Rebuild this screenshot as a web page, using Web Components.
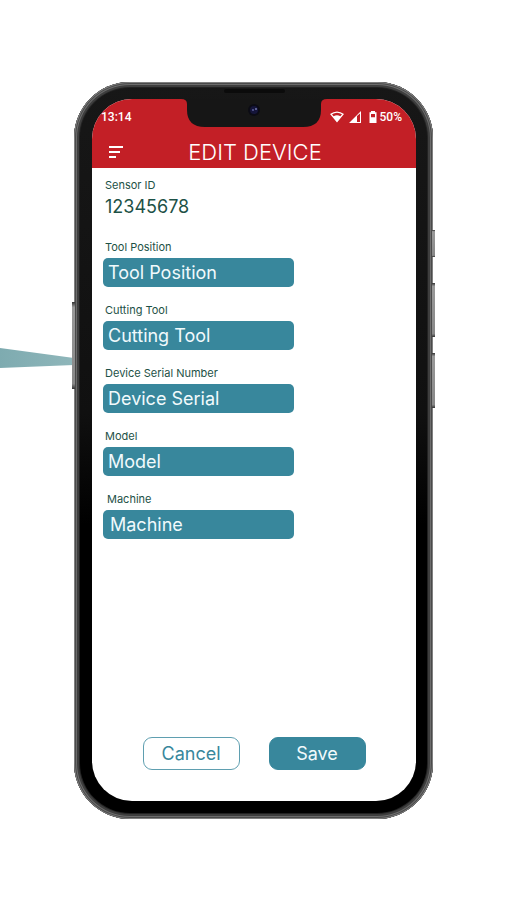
<!DOCTYPE html>
<html lang="en">
<head>
<meta charset="UTF-8">
<meta name="viewport" content="width=device-width, initial-scale=1">
<title>Edit Device</title>
<style>
    body {
        margin: 0;
        background: #fff;
        font-family: Inter, "Liberation Sans", sans-serif;
    }
</style>
</head>
<body>
<device-stage>
    <phone-frame>
        <status-bar slot="status" time="13:14" battery="50%"></status-bar>
        <app-header slot="header">EDIT DEVICE</app-header>
        <device-form>
            <read-only-field label="Sensor ID">12345678</read-only-field>
            <text-field label="Tool Position" value="Tool Position"></text-field>
            <text-field label="Cutting Tool" value="Cutting Tool"></text-field>
            <text-field label="Device Serial Number" value="Device Serial"></text-field>
            <text-field label="Model" value="Model"></text-field>
            <text-field label="Machine" value="Machine" indent></text-field>
            <action-button slot="actions">Cancel</action-button>
            <action-button slot="actions" primary>Save</action-button>
        </device-form>
    </phone-frame>
</device-stage>

<script>
class DeviceStage extends HTMLElement {
    constructor() {
        super();
        this.attachShadow({mode: 'open'}).innerHTML = `
            <style>
                :host {
                    display: flex;
                    justify-content: center;
                    position: relative;
                    box-sizing: border-box;
                    min-height: 100vh;
                    padding: 82px 74px 81px;
                }
                .beam {
                    position: absolute;
                    left: 0;
                    top: 348px;
                    width: 74px;
                    height: 20px;
                }
            </style>
            <svg class="beam" viewBox="0 0 74 20" preserveAspectRatio="none" aria-hidden="true">
                <defs>
                    <linearGradient id="fade">
                        <stop offset="0" stop-color="#7eabb0"/>
                        <stop offset="1" stop-color="#8fb6ba"/>
                    </linearGradient>
                </defs>
                <path d="M0 0 74 10V17L0 20Z" fill="url(#fade)"/>
            </svg>
            <slot></slot>
        `;
    }
}

class PhoneFrame extends HTMLElement {
    constructor() {
        super();
        this.attachShadow({mode: 'open'}).innerHTML = `
            <style>
                :host {
                    display: flex;
                    flex: 1;
                    max-width: 420px;
                    position: relative;
                    box-sizing: border-box;
                    padding: 17px 17px 18px 18px;
                    border-radius: 56px;
                    background: linear-gradient(#171717, #101010 45%, #000 60%);
                    box-shadow:
                        inset 0 0 0 1px #808080,
                        inset 0 0 0 2px #4a4a4a,
                        inset 0 0 0 3px #6c6c6c,
                        inset 0 0 0 5px #3e3e3e,
                        inset 0 0 0 6px #222;
                }
                .screen {
                    display: flex;
                    flex: 1;
                    flex-direction: column;
                    min-width: 0;
                    overflow: hidden;
                    border-radius: 40px;
                    background: #fff;
                }
                .top {
                    background: #c31f26;
                    color: #fff;
                }
                .notch {
                    position: absolute;
                    top: 6px;
                    left: 50%;
                    width: 146px;
                    height: 40px;
                    margin-left: -73px;
                }
                .key {
                    position: absolute;
                    width: 3px;
                    background: linear-gradient(#333, #999 6%, #888 94%, #333);
                }
                .left { left: -2px; }
                .right { right: -2px; }
                .silent { top: 148px; height: 27px; }
                .up { top: 201px; height: 54px; }
                .down { top: 271px; height: 55px; }
                .power { top: 220px; height: 87px; }
            </style>
            <span class="key left power"></span>
            <span class="key right silent"></span>
            <span class="key right up"></span>
            <span class="key right down"></span>
            <div class="screen">
                <div class="top">
                    <slot name="status"></slot>
                    <slot name="header"></slot>
                </div>
                <slot></slot>
            </div>
            <svg class="notch" viewBox="0 0 146 40" aria-hidden="true">
                <path d="M0 11H146Q140 11 140 16V22Q140 39 122 39H24Q6 39 6 22V16Q6 11 0 11Z" fill="#161616"/>
                <rect x="43" y="1" width="61" height="4" rx="2" fill="#0b0b0b"/>
                <circle cx="73" cy="22" r="6" fill="#0b0b14"/>
                <circle cx="73" cy="22" r="4" fill="#15153a"/>
                <circle cx="72" cy="22" r="1" fill="#5a5e98"/>
                <circle cx="75" cy="21" r="1" fill="#7478b0"/>
            </svg>
        `;
    }
}

class StatusBar extends HTMLElement {
    constructor() {
        super();
        this.attachShadow({mode: 'open'}).innerHTML = `
            <style>
                :host {
                    display: flex;
                    align-items: center;
                    justify-content: space-between;
                    box-sizing: border-box;
                    height: 36px;
                    padding: 0 14px 0 9px;
                    font: 500 12px/16px Roboto, sans-serif;
                }
                .icons {
                    display: flex;
                    align-items: center;
                    gap: 2px;
                }
                svg { display: block; }
            </style>
            <span>${this.getAttribute('time')}</span>
            <span class="icons">
                <svg width="48" height="14" viewBox="0 0 48 14" fill="currentColor" aria-hidden="true">
                    <path fill-rule="evenodd" d="M0 4Q7 -1 14 4L7 12.500ZM2 4.300 3.600 6.200Q7 4.200 10.400 6.200L12 4.300Q7 1 2 4.300Z"/>
                    <path fill-rule="evenodd" d="M19 13 31 1V13ZM27 6V12H30V3.500Z"/>
                    <path fill-rule="evenodd" d="M41 1H45V2.300H46.500V13H39.500V2.300H41ZM41 4V7.300H45V4Z"/>
                </svg>
                <span>${this.getAttribute('battery')}</span>
            </span>
        `;
    }
}

class AppHeader extends HTMLElement {
    constructor() {
        super();
        this.attachShadow({mode: 'open'}).innerHTML = `
            <style>
                :host {
                    display: grid;
                    grid-template-columns: 48px 1fr 46px;
                    align-items: center;
                    height: 33px;
                }
                button {
                    width: 48px;
                    height: 32px;
                    padding: 0;
                    border: 0;
                    background: none;
                    color: inherit;
                }
                svg {
                    display: block;
                    margin: 0 auto;
                }
                h1 {
                    margin: 0;
                    font-size: 22px;
                    font-weight: 300;
                    line-height: 28px;
                    text-align: center;
                    white-space: nowrap;
                }
            </style>
            <button type="button" aria-label="Menu">
                <svg width="16" height="12" viewBox="0 0 16 12" fill="currentColor" aria-hidden="true">
                    <path d="M1 0H15V2H1ZM1 5H12V7H1ZM1 10H8V12H1Z"/>
                </svg>
            </button>
            <h1><slot></slot></h1>
        `;
    }
}

class DeviceForm extends HTMLElement {
    constructor() {
        super();
        this.attachShadow({mode: 'open'}).innerHTML = `
            <style>
                :host {
                    display: flex;
                    flex: 1;
                    flex-direction: column;
                    padding: 9px 11px 31px;
                }
                .fields {
                    display: flex;
                    flex: 1;
                    flex-direction: column;
                    gap: 15px;
                }
                .actions {
                    display: flex;
                    justify-content: center;
                    gap: 29px;
                }
            </style>
            <div class="fields"><slot></slot></div>
            <div class="actions"><slot name="actions"></slot></div>
        `;
    }
}

class ReadOnlyField extends HTMLElement {
    constructor() {
        super();
        this.attachShadow({mode: 'open'}).innerHTML = `
            <style>
                :host {
                    display: block;
                    padding: 0 2px 5px;
                    color: #1d5146;
                }
                .label {
                    font-size: 11px;
                    line-height: 16px;
                }
                .value {
                    padding-top: 2px;
                    font-size: 18px;
                    line-height: 24px;
                }
            </style>
            <div class="label">${this.getAttribute('label')}</div>
            <div class="value"><slot></slot></div>
        `;
    }
}

class TextField extends HTMLElement {
    constructor() {
        super();
        this.attachShadow({mode: 'open'}).innerHTML = `
            <style>
                :host {
                    display: flex;
                    flex-direction: column;
                    gap: 3px;
                    color: #1d5146;
                }
                label {
                    padding: 0 2px;
                    font-size: 11px;
                    line-height: 16px;
                }
                input {
                    box-sizing: border-box;
                    width: calc(100% - 111px);
                    height: 29px;
                    padding: 0 5px 1px;
                    border: 0;
                    border-radius: 5px;
                    background: #38879c;
                    color: #f1fafc;
                    font: 400 18px/24px Inter, sans-serif;
                }
                :host([indent]) label { padding-left: 4px; }
                :host([indent]) input { padding-left: 7px; }
            </style>
            <label for="field">${this.getAttribute('label')}</label>
            <input id="field" type="text" value="${this.getAttribute('value')}">
        `;
    }
}

class ActionButton extends HTMLElement {
    constructor() {
        super();
        this.attachShadow({mode: 'open'}).innerHTML = `
            <style>
                :host {
                    display: block;
                }
                button {
                    width: 97px;
                    height: 33px;
                    padding: 0;
                    border: 1px solid #5f9fb0;
                    border-radius: 9px;
                    background: #fff;
                    color: #38879c;
                    font: 400 18px/24px Inter, sans-serif;
                }
                :host([primary]) button {
                    border-color: #38879c;
                    background: #38879c;
                    color: #f1fafc;
                }
            </style>
            <button type="button"><slot></slot></button>
        `;
    }
}

customElements.define('device-stage', DeviceStage);
customElements.define('phone-frame', PhoneFrame);
customElements.define('status-bar', StatusBar);
customElements.define('app-header', AppHeader);
customElements.define('device-form', DeviceForm);
customElements.define('read-only-field', ReadOnlyField);
customElements.define('text-field', TextField);
customElements.define('action-button', ActionButton);
</script>
</body>
</html>
